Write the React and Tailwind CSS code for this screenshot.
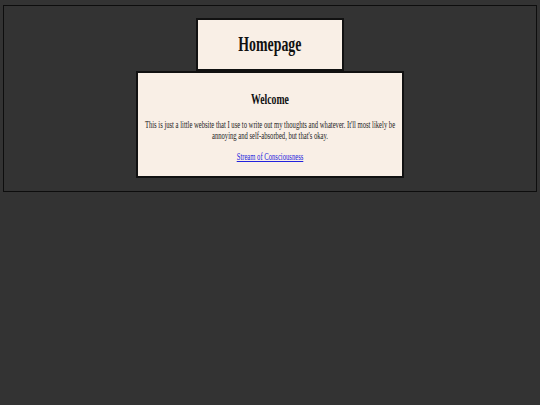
export default function App() {
  return (
    <div className="min-h-[405px] w-full bg-[#333333] px-[3px] pt-[5px]" style={{ fontFamily: '"Liberation Serif", "Times New Roman", serif' }}>
      <div className="flex flex-col items-center border border-[#0d0d0d] bg-[#333333] pb-[13px] pt-[12px]">
        {/* Homepage title */}
        <div className="flex h-[53px] w-[148px] items-center justify-center overflow-visible border-2 border-[#111111] bg-[#f9efe6]">
          <h1 className="origin-center scale-x-[0.66] whitespace-nowrap text-[21px] font-bold leading-none text-[#111111]">Homepage</h1>
        </div>
        {/* Welcome card */}
        <div className="flex h-[107px] w-[268px] flex-col items-center border-2 border-[#111111] bg-[#f9efe6] pt-[18px]">
          <div className="flex w-[402px] shrink-0 origin-center scale-x-[0.65] flex-col items-center text-center">
            <h2 className="text-[15px] font-bold leading-[16px] text-[#111111]">Welcome</h2>
            <p className="mt-[12px] text-[10.2px] leading-[11px] text-[#222222]">
              This is just a little website that I use to write out my thoughts and whatever. It'll most likely be annoying and self-absorbed, but that's okay.
            </p>
            <a href="#" className="mt-[10px] text-[10.2px] leading-[11px] text-[#2222dd] underline">Stream of Consciousness</a>
          </div>
        </div>
      </div>
    </div>
  );
}
